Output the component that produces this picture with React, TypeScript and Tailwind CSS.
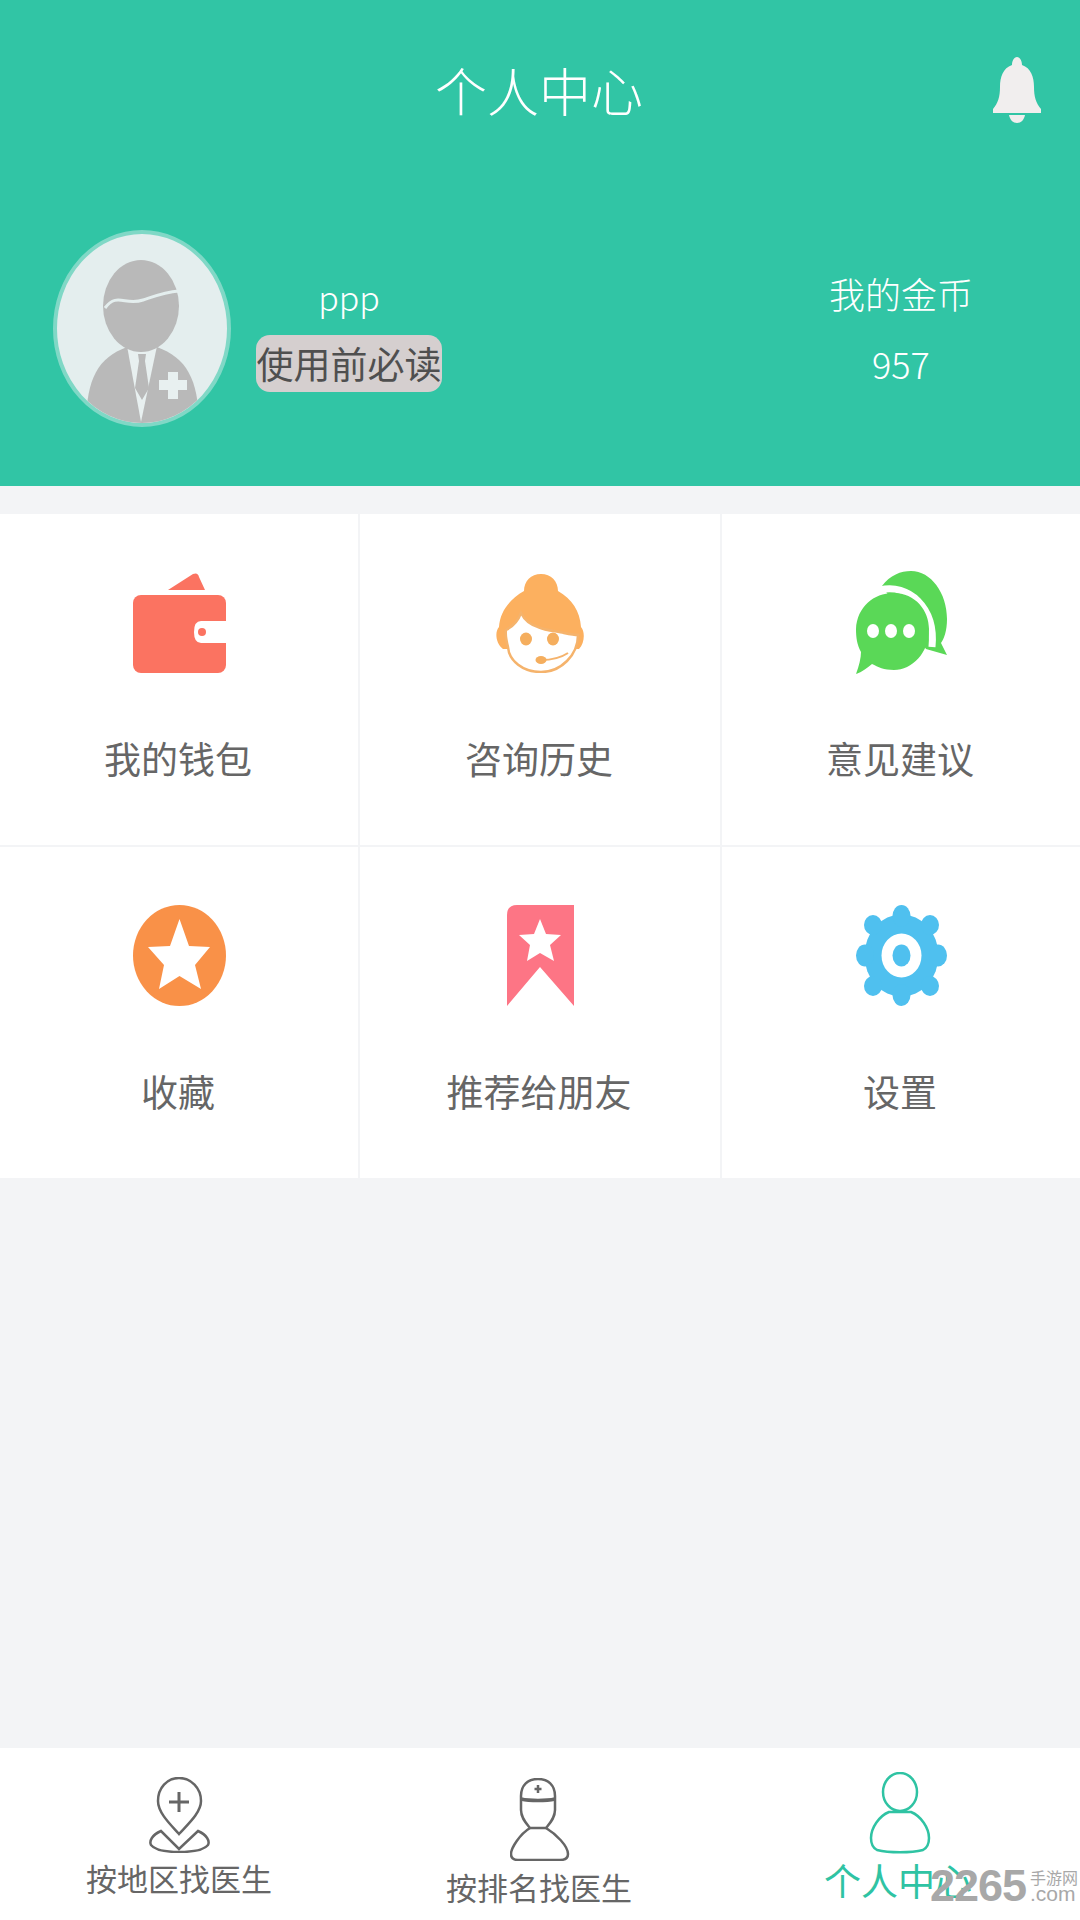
const cjk = "font-['Noto_Sans_CJK_SC','Noto_Sans',sans-serif]";

const WalletIcon = () => (
  <svg width="93" height="100" viewBox="0 0 93 100">
    <path d="M35 17 L60 1 Q65 -1 66 4 L72 17 Z" fill="#fb7361" />
    <rect x="0" y="22" width="93" height="78" rx="8" fill="#fb7361" />
    <path d="M93 48 H68 Q61 48 61 59 Q61 70 68 70 H93 Z" fill="#fff" />
    <circle cx="69" cy="59" r="4" fill="#fb7361" />
  </svg>
);

const AgentIcon = () => (
  <svg width="90" height="100" viewBox="0 0 90 100">
    <path d="M46 1 C56 1 63 8 63 18 C77 26 85 38 86 54 C90 58 90 70 84 76 L8 76 C0 70 0 58 4 54 C5 38 15 26 29 18 C29 8 36 1 46 1 Z" fill="#fcb05f" />
    <path d="M26 40 C30 48 36 52 43 54 C52 58 62 58 69 60 C74 61 80 62 83 62 C83 82 66 99 46 99 C28 99 14 88 13 74 C11 66 10 62 11 57 C17 54 23 48 26 40 Z" fill="#fff" stroke="#f5b36c" strokeWidth="2.5" />
    <ellipse cx="31" cy="66" rx="6" ry="6.5" fill="#f5ae5e" />
    <ellipse cx="58" cy="66" rx="6" ry="6.5" fill="#f5ae5e" />
    <path d="M46 87 C58 87 67 84 73 80" fill="none" stroke="#f5b36c" strokeWidth="2" />
    <ellipse cx="46" cy="87" rx="5.5" ry="4" fill="#f5ae5e" />
  </svg>
);

const ChatIcon = () => (
  <svg width="91" height="103" viewBox="0 0 91 103">
    <path d="M26 15 C34 4 45 0 55 0 C75 0 91 22 91 48 C91 60 88 68 85 72 L91 84 L70 78 Z" fill="#5ad857" />
    <path d="M24 19 C52 12 80 36 76 76" fill="none" stroke="#fff" strokeWidth="7" />
    <path d="M37 22 C60 22 73 40 73 58 C73 82 56 99 38 99 C28 99 22 96 16 93 C11 97 6 101 0 103 C3 95 5 87 5 81 C1 74 0 66 0 58 C1 36 18 22 37 22 Z" fill="#5ad857" />
    <ellipse cx="17" cy="60" rx="6" ry="7" fill="#fff" />
    <ellipse cx="35" cy="60" rx="6" ry="7" fill="#fff" />
    <ellipse cx="53" cy="60" rx="6" ry="7" fill="#fff" />
  </svg>
);

const StarIcon = () => (
  <svg width="93" height="101" viewBox="0 0 93 101">
    <ellipse cx="46.5" cy="50.5" rx="46.5" ry="50.5" fill="#f99148" />
    <path d="M46.5 14 L56 41 L77 42 L62 60 L68 84 L46.5 71 L26 84 L31 60 L15 42 L37 41 Z" fill="#fff" />
  </svg>
);

const BookmarkIcon = () => (
  <svg width="67" height="101" viewBox="0 0 67 101">
    <path d="M0 10 Q0 0 10 0 H67 V101 L33 62 L0 101 Z" fill="#fd7585" />
    <path d="M33 14 L39 29 L54 30 L43 40 L47 56 L33 48 L20 56 L23 40 L12 30 L27 29 Z" fill="#fff" />
  </svg>
);

const GearIcon = () => (
  <svg width="91" height="101" viewBox="0 0 91 101">
    <g fill="#4fc0ef">
      <ellipse cx="45.5" cy="50.5" rx="37" ry="41" />
      <ellipse cx="45.5" cy="11" rx="9" ry="11" />
      <ellipse cx="45.5" cy="90" rx="9" ry="11" />
      <ellipse cx="9" cy="50.5" rx="9" ry="11" />
      <ellipse cx="82" cy="50.5" rx="9" ry="11" />
      <ellipse cx="17" cy="20" rx="9" ry="10" />
      <ellipse cx="74" cy="20" rx="9" ry="10" />
      <ellipse cx="17" cy="81" rx="9" ry="10" />
      <ellipse cx="74" cy="81" rx="9" ry="10" />
    </g>
    <ellipse cx="45.5" cy="50.5" rx="20" ry="22" fill="#fff" />
    <ellipse cx="45.5" cy="50.5" rx="9" ry="11" fill="#4fc0ef" />
  </svg>
);

const Avatar = () => (
  <svg width="178" height="197" viewBox="0 0 178 197" className="shrink-0">
    <defs>
      <clipPath id="avatar-clip">
        <ellipse cx="89" cy="98.5" rx="85" ry="94.5" />
      </clipPath>
    </defs>
    <ellipse cx="89" cy="98.5" rx="87" ry="96.5" fill="#e4eeee" stroke="#80d8c6" strokeWidth="4" />
    <g clipPath="url(#avatar-clip)">
      <path d="M33 197 C33 150 44 128 74 117 L104 117 C134 128 146 150 146 197 Z" fill="#b9b9b9" />
      <path d="M74 116 H104 L88 192 Z" fill="#e8f0f0" />
      <path d="M85 124 H93 L92 131 L96 158 L89 170 L82 158 L86 131 Z" fill="#b9b9b9" />
    </g>
    <ellipse cx="88" cy="76" rx="38" ry="46" fill="#b9b9b9" />
    <path d="M52 78 C64 62 72 76 90 70 C102 66 112 62 126 61" fill="none" stroke="#e4eeee" strokeWidth="3" />
    <path d="M115 142 H125 V150 H134 V160 H125 V169 H115 V160 H106 V150 H115 Z" fill="#e8f0f0" />
  </svg>
);

const BellIcon = () => (
  <svg width="48" height="66" viewBox="0 0 48 66">
    <path d="M24 0 C27 0 29 4 29 8 C38 11 41 20 41 30 C41 40 43 46 48 52 V56 H0 V52 C5 46 7 40 7 30 C7 20 10 11 19 8 C19 4 21 0 24 0 Z" fill="#f1eeee" />
    <path d="M16 58 H32 C31 63 28 66 24 66 C20 66 17 63 16 58 Z" fill="#f1eeee" />
  </svg>
);

const PinIcon = () => (
  <svg width="62" height="76" viewBox="0 0 62 76" fill="none" stroke="#666" strokeWidth="2.5">
    <path d="M30 1 C18 1 9 11 9 24 C9 36 22 48 30 57 C38 48 52 36 52 24 C52 11 42 1 30 1 Z" />
    <path d="M30 15 V35 M20 25 H40" strokeWidth="3" />
    <path d="M12 54 C3 58 0 64 2 68 C6 73 18 75 30 75 C43 75 55 73 59 68 C61 64 58 58 49 54 L30 72 Z" />
  </svg>
);

const NurseIcon = () => (
  <svg width="60" height="83" viewBox="0 0 60 83" fill="none" stroke="#666" strokeWidth="2.5">
    <path d="M11 18 C11 7 18 1 28 1 C38 1 45 7 45 18 V32 C45 40 40 45 36 50 H20 C16 45 11 40 11 32 Z" />
    <path d="M11 21 C20 23 36 23 45 21" strokeWidth="3.5" />
    <path d="M28 7 V15 M24.5 11 H31.5" strokeWidth="2.5" />
    <path d="M20 50 C10 56 1 70 1 76 C1 80 4 82 8 82 H50 C55 82 58 80 58 76 C58 68 46 56 36 50" />
  </svg>
);

const PersonIcon = () => (
  <svg width="62" height="82" viewBox="0 0 62 82" fill="none" stroke="#2fc3a3" strokeWidth="2.5">
    <ellipse cx="31" cy="20" rx="17" ry="19" />
    <path d="M20 40 H42 C52 44 60 56 60 66 C60 72 58 76 54 78 C42 81 20 81 8 78 C4 76 2 72 2 66 C2 56 10 44 20 40 Z" />
  </svg>
);

const menu = [
  { label: "我的钱包", icon: <WalletIcon /> },
  { label: "咨询历史", icon: <AgentIcon /> },
  { label: "意见建议", icon: <ChatIcon /> },
  { label: "收藏", icon: <StarIcon /> },
  { label: "推荐给朋友", icon: <BookmarkIcon /> },
  { label: "设置", icon: <GearIcon /> },
];

export default function App() {
  return (
    <div className={`relative flex h-[1920px] w-[1080px] flex-col overflow-hidden bg-[#f3f4f6] ${cjk}`}>
      <header className="h-[486px] bg-[#31c5a5] text-white">
        <div className="grid grid-cols-[1fr_auto_1fr] items-start pt-[57px]">
          <div />
          <h1 className="mt-[7px] -translate-x-[1px] text-[52px] leading-[52px] font-light">个人中心</h1>
          <div className="justify-self-end pr-[39px]">
            <BellIcon />
          </div>
        </div>
        <div className="mt-[107px] flex pl-[53px] pr-[107px]">
          <Avatar />
          <div className="ml-[25px] flex w-[186px] flex-col items-center pt-[49px]">
            <span className="text-[34px] leading-[36px] font-light">ppp</span>
            <span className="mt-[20px] flex h-[57px] w-full items-center justify-center rounded-[14px] bg-[#d5cfcf] text-[37px] whitespace-nowrap text-[#4f4f4f]">
              使用前必读
            </span>
          </div>
          <div className="ml-auto flex flex-col items-center pt-[45px] text-[36px] leading-[36px] font-light">
            <span>我的金币</span>
            <span className="mt-[34px]">957</span>
          </div>
        </div>
      </header>

      <main className="flex-1 pt-[28px]">
        <div className="grid grid-cols-[358px_360px_358px] gap-[2px]">
          {menu.map((item) => (
            <div key={item.label} className="flex h-[331px] flex-col items-center bg-white pt-[58px]">
              <div className="flex h-[101px] items-center">{item.icon}</div>
              <span className="mt-[67px] -translate-x-[1px] text-[37px] leading-[36px] text-[#666]">{item.label}</span>
            </div>
          ))}
        </div>
      </main>

      <nav className="grid h-[172px] grid-cols-3 bg-white">
        <div className="flex flex-col items-center pt-[29px] text-[31px] leading-[31px] text-[#666]">
          <PinIcon />
          <span className="mt-[9px] -translate-x-[1px]">按地区找医生</span>
        </div>
        <div className="flex flex-col items-center pt-[30px] text-[31px] leading-[31px] text-[#666]">
          <NurseIcon />
          <span className="mt-[10px] -translate-x-[1px]">按排名找医生</span>
        </div>
        <div className="flex flex-col items-center pt-[24px] text-[37px] leading-[36px] text-[#2fc3a3]">
          <PersonIcon />
          <span className="mt-[8px] -translate-x-[2px]">个人中心</span>
        </div>
      </nav>

      {/* site stamp over the tab bar */}
      <div className="absolute right-[2px] bottom-[17px] flex items-center text-[#a8a8a8]">
        <span className="text-[45px] leading-[34px] font-bold tracking-[-1px] font-['Liberation_Sans',sans-serif]">2265</span>
        <div className="ml-[4px] flex flex-col items-start">
          <span className="text-[16px] leading-[16px]">手游网</span>
          <span className="text-[21px] leading-[18px] font-['Liberation_Sans',sans-serif]">.com</span>
        </div>
      </div>
    </div>
  );
}
